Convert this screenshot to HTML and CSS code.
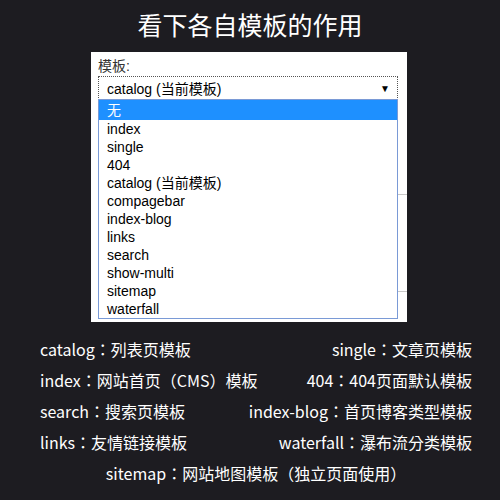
FILE: index.html
```html
<!DOCTYPE html>
<html lang="zh-CN">
<head>
  <meta charset="UTF-8">
  <title>看下各自模板的作用</title>
  <link rel="stylesheet" href="styles.css">
</head>
<body>

  <h1 class="title">看下各自模板的作用</h1>

  <div class="panel">
    <div class="field-label">模板:</div>
    <div class="select-box">
      <span>catalog (当前模板)</span>
      <span class="arrow">&#9660;</span>
    </div>
    <div class="form-rows">
      <div class="form-row row-a"></div>
      <div class="form-row row-b"></div>
    </div>

    <!-- 展开的下拉菜单 -->
    <ul class="dropdown">
      <li class="active">无</li>
      <li>index</li>
      <li>single</li>
      <li>404</li>
      <li>catalog (当前模板)</li>
      <li>compagebar</li>
      <li>index-blog</li>
      <li>links</li>
      <li>search</li>
      <li>show-multi</li>
      <li>sitemap</li>
      <li>waterfall</li>
    </ul>
  </div>

  <div class="notes" lang="zh-TW">
    <div class="note-row">
      <span>catalog：列表页模板</span>
      <span>single：文章页模板</span>
    </div>
    <div class="note-row">
      <span>index：网站首页（CMS）模板</span>
      <span>404：404页面默认模板</span>
    </div>
    <div class="note-row">
      <span>search：搜索页模板</span>
      <span>index-blog：首页博客类型模板</span>
    </div>
    <div class="note-row">
      <span>links：友情链接模板</span>
      <span>waterfall：瀑布流分类模板</span>
    </div>
    <div class="note-row center">
      <span>sitemap：网站地图模板（独立页面使用）</span>
    </div>
  </div>

</body>
</html>
```

FILE: styles.css
```css
body {
  margin: 0;
  width: 500px;
  height: 500px;
  overflow: hidden;
  background-color: #1d1c21;
  font-family: "Noto Sans CJK SC", "Noto Sans", sans-serif;
}

.title {
  margin: 0;
  height: 52px;
  line-height: 49px;
  text-align: center;
  color: #fff;
  font-size: 25px;
  font-weight: normal;
}

.panel {
  position: relative;
  margin-left: 91px;
  width: 316px;
  height: 270px;
  box-sizing: border-box;
  padding: 5px 9px 0 7px;
  background-color: #fff;
  overflow: hidden;
  font-family: "Liberation Sans", "Noto Sans CJK SC", sans-serif;
}

.field-label {
  height: 19px;
  line-height: 19px;
  font-size: 14px;
  color: #333;
}

.select-box {
  display: flex;
  justify-content: space-between;
  align-items: center;
  height: 24px;
  box-sizing: border-box;
  padding: 0 7px 0 8px;
  border: 1px dotted #555;
  font-size: 14px;
  color: #000;
}

.arrow {
  font-size: 10px;
}

.form-rows {
  margin-right: -9px;
}

.form-row {
  border-bottom: 1px solid #c8c8c8;
}

.row-a {
  height: 94px;
}

.row-b {
  height: 96px;
}

/* 展开的下拉列表 */
.dropdown {
  position: absolute;
  top: 47px;
  left: 7px;
  width: 300px;
  margin: 0;
  padding: 0;
  list-style: none;
  box-sizing: border-box;
  border: 1px solid #7a9ad6;
  background-color: #fff;
  font-size: 14px;
  color: #000;
}

.dropdown li {
  height: 18px;
  line-height: 18px;
  padding-left: 8px;
}

.dropdown li.active {
  height: 20px;
  line-height: 20px;
  background-color: #1e90ff;
  color: #fff;
}

.notes {
  margin-top: 11px;
  padding: 0 28px 0 40px;
  color: #fff;
  font-size: 16px;
  font-family: "Noto Sans CJK TC", "Noto Sans CJK SC", sans-serif;
  white-space: nowrap;
}

.note-row {
  display: flex;
  justify-content: space-between;
  align-items: center;
  height: 31px;
}

.note-row.center {
  justify-content: center;
}
```
